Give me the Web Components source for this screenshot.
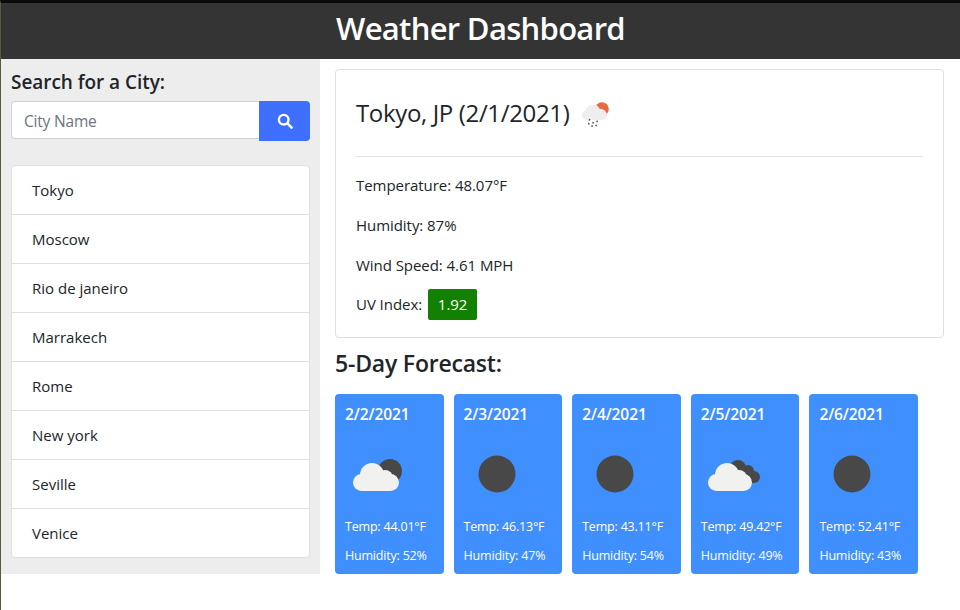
<!DOCTYPE html>
<html>
<head>
<meta charset="utf-8">
<title>Weather Dashboard</title>
<style>
    html, body { margin: 0; height: 100%; background: #fff; }
    body { font-family: "Open Sans", "Noto Sans", sans-serif; color: #212529; }
</style>
</head>
<body>
<weather-app>
    <city-search slot="side"></city-search>
    <city-list slot="side">
        <city-item>Tokyo</city-item>
        <city-item>Moscow</city-item>
        <city-item>Rio de janeiro</city-item>
        <city-item>Marrakech</city-item>
        <city-item>Rome</city-item>
        <city-item>New york</city-item>
        <city-item>Seville</city-item>
        <city-item>Venice</city-item>
    </city-list>
    <current-weather slot="main" title-text="Tokyo, JP (2/1/2021)" temp="48.07" humidity="87" wind="4.61" uv="1.92"></current-weather>
    <forecast-row slot="main">
        <forecast-card date="2/2/2021" icon="few" temp="44.01" humidity="52"></forecast-card>
        <forecast-card date="2/3/2021" icon="clear" temp="46.13" humidity="47"></forecast-card>
        <forecast-card date="2/4/2021" icon="clear" temp="43.11" humidity="54"></forecast-card>
        <forecast-card date="2/5/2021" icon="broken" temp="49.42" humidity="49"></forecast-card>
        <forecast-card date="2/6/2021" icon="clear" temp="52.41" humidity="43"></forecast-card>
    </forecast-row>
</weather-app>

<script>
const appTemplate = document.createElement("template");
appTemplate.innerHTML = `
<style>
    :host {
        display: block;
        width: 960px;
        height: 610px;
        box-sizing: border-box;
        border-top: 3px solid #0b0b0b;
        border-left: 1px solid #5c5a3c;
        overflow: hidden;
    }
    header {
        height: 56px;
        box-sizing: border-box;
        padding-bottom: 6px;
        background: #343434;
        color: #fff;
        font-size: 31px;
        font-weight: 600;
        letter-spacing: -0.7px;
        display: flex;
        justify-content: center;
        align-items: center;
    }
    .body {
        display: flex;
        align-items: flex-start;
    }
    aside {
        width: 319px;
        height: 515px;
        box-sizing: border-box;
        background: #ededed;
        padding: 10px 10px 0;
    }
    main {
        width: 609px;
        margin: 10px 0 0 15px;
    }
</style>
<header>Weather Dashboard</header>
<div class="body">
    <aside><slot name="side"></slot></aside>
    <main><slot name="main"></slot></main>
</div>
`;

class WeatherApp extends HTMLElement {
    constructor() {
        super();
        this.attachShadow({mode: 'open'});
        this.shadowRoot.append(appTemplate.content.cloneNode(true));
    }
}

const searchTemplate = document.createElement("template");
searchTemplate.innerHTML = `
<style>
    :host {
        display: block;
    }
    h4 {
        margin: 0 0 6px;
        height: 26px;
        line-height: 26px;
        font-size: 19px;
        font-weight: 600;
        letter-spacing: -0.05px;
    }
    .group {
        display: flex;
        align-items: flex-start;
    }
    input {
        width: 248px;
        height: 38px;
        box-sizing: border-box;
        padding: 1px 12px 0;
        border: 1px solid #ced4da;
        border-right: 0;
        border-radius: 4px 0 0 4px;
        background: #fff;
        font: 15.5px "Open Sans", sans-serif;
        letter-spacing: -0.2px;
    }
    input::placeholder {
        color: #6c757d;
        opacity: 1;
    }
    button {
        width: 51px;
        height: 40px;
        border: 0;
        padding: 0;
        border-radius: 0 4px 4px 0;
        background: #3f6fff;
        display: flex;
        align-items: center;
        justify-content: center;
    }
</style>
<h4>Search for a City:</h4>
<div class="group">
    <input type="text" placeholder="City Name">
    <button aria-label="Search">
        <svg width="16" height="16" viewBox="0 0 16 16">
            <circle cx="6.7" cy="6.7" r="4.8" fill="none" stroke="#fff" stroke-width="2.4"/>
            <path d="M10.4 10.4 L14.6 14.6" stroke="#fff" stroke-width="2.6" stroke-linecap="round"/>
        </svg>
    </button>
</div>
`;

class CitySearch extends HTMLElement {
    constructor() {
        super();
        this.attachShadow({mode: 'open'});
        this.shadowRoot.append(searchTemplate.content.cloneNode(true));
    }
}

const listTemplate = document.createElement("template");
listTemplate.innerHTML = `
<style>
    :host {
        display: block;
        margin-top: 24px;
        background: #fff;
        border: 1px solid #dfdfdf;
        border-radius: 4px;
    }
</style>
<slot></slot>
`;

class CityList extends HTMLElement {
    constructor() {
        super();
        this.attachShadow({mode: 'open'});
        this.shadowRoot.append(listTemplate.content.cloneNode(true));
    }
}

const itemTemplate = document.createElement("template");
itemTemplate.innerHTML = `
<style>
    :host {
        display: flex;
        align-items: center;
        height: 48px;
        padding: 0 20px;
        font-size: 15px;
        border-bottom: 1px solid #dfdfdf;
    }
    :host(:last-child) {
        border-bottom: 0;
    }
</style>
<slot></slot>
`;

class CityItem extends HTMLElement {
    constructor() {
        super();
        this.attachShadow({mode: 'open'});
        this.shadowRoot.append(itemTemplate.content.cloneNode(true));
    }
}

const icons = {
    rain: `<svg width="40" height="40" viewBox="0 0 40 40">
        <circle cx="27" cy="16" r="6.8" fill="#e8693f"/>
        <g fill="#eeeeee">
            <rect x="7" y="17" width="25" height="10" rx="5"/>
            <circle cx="18" cy="19" r="7.5"/>
            <circle cx="26" cy="20.5" r="4.5"/>
        </g>
        <path d="M14.7 26l-.4 1.6M18.3 29l-.4 1.6M22.3 27.6l-.4 1.6M14 30l-.4 1.6M17.3 32.3l-.4 1.6M21.3 31.6l-.4 1.6" stroke="#555" stroke-width="1.5"/>
    </svg>`,
    few: `<svg width="66" height="66" viewBox="0 0 66 66">
        <circle cx="45" cy="30" r="12" fill="#484848"/>
        <circle cx="40" cy="37" r="9.5" fill="#484848"/>
        <g fill="#f1f1ef">
            <rect x="8" y="33" width="46" height="17" rx="8.5"/>
            <circle cx="27" cy="34" r="12"/>
            <circle cx="40" cy="37" r="8"/>
        </g>
    </svg>`,
    broken: `<svg width="66" height="66" viewBox="0 0 66 66">
        <g fill="#484848">
            <circle cx="37" cy="27" r="8"/>
            <circle cx="47" cy="30" r="6"/>
            <circle cx="53" cy="36" r="6"/>
            <rect x="36" y="28" width="16" height="14"/>
        </g>
        <g fill="#f1f1ef">
            <rect x="7" y="33" width="44" height="17" rx="8.5"/>
            <circle cx="26" cy="34" r="12"/>
            <circle cx="38" cy="37" r="8"/>
        </g>
    </svg>`,
    clear: `<svg width="66" height="66" viewBox="0 0 66 66">
        <circle cx="33" cy="33" r="18.5" fill="#484848"/>
    </svg>`
};

const currentTemplate = document.createElement("template");
currentTemplate.innerHTML = `
<style>
    :host {
        display: block;
        height: 269px;
        box-sizing: border-box;
        padding: 20px;
        border: 1px solid #dfdfdf;
        border-radius: 4px;
        background: #fff;
    }
    h3 {
        margin: 0;
        height: 46px;
        display: flex;
        align-items: center;
        gap: 6px;
        font-size: 24px;
        font-weight: 400;
        letter-spacing: -0.35px;
        white-space: nowrap;
    }
    #title {
        margin-top: -2px;
    }
    #icon svg {
        display: block;
    }
    hr {
        margin: 20px 0 0;
        border: 0;
        border-top: 1px solid #e3e3e3;
    }
    .rows {
        display: grid;
        grid-auto-rows: 40px;
        margin-top: 8px;
        font-size: 15px;
        letter-spacing: -0.05px;
    }
    .rows div {
        display: flex;
        align-items: center;
        gap: 6px;
    }
    .rows .last {
        margin-top: -2px;
    }
    .uv {
        width: 49px;
        height: 31px;
        display: inline-flex;
        align-items: center;
        justify-content: center;
        background: #128000;
        color: #fff;
        border-radius: 2px;
    }
</style>
<h3><span id="title"></span><span id="icon"></span></h3>
<hr>
<div class="rows">
    <div id="temp"></div>
    <div id="humidity"></div>
    <div id="wind"></div>
    <div class="last">UV Index: <span class="uv" id="uv"></span></div>
</div>
`;

class CurrentWeather extends HTMLElement {
    constructor() {
        super();
        this.attachShadow({mode: 'open'});
        this.shadowRoot.append(currentTemplate.content.cloneNode(true));
    }

    connectedCallback() {
        const root = this.shadowRoot;
        root.querySelector("#title").textContent = this.getAttribute("title-text");
        root.querySelector("#icon").innerHTML = icons.rain;
        root.querySelector("#temp").textContent = `Temperature: ${this.getAttribute("temp")}°F`;
        root.querySelector("#humidity").textContent = `Humidity: ${this.getAttribute("humidity")}%`;
        root.querySelector("#wind").textContent = `Wind Speed: ${this.getAttribute("wind")} MPH`;
        root.querySelector("#uv").textContent = this.getAttribute("uv");
    }
}

const rowTemplate = document.createElement("template");
rowTemplate.innerHTML = `
<style>
    :host {
        display: block;
    }
    h4 {
        margin: 12px 0 16px;
        height: 28px;
        line-height: 26px;
        font-size: 23px;
        font-weight: 600;
        letter-spacing: -0.2px;
    }
    .cards {
        display: flex;
        gap: 10px;
    }
</style>
<h4>5-Day Forecast:</h4>
<div class="cards"><slot></slot></div>
`;

class ForecastRow extends HTMLElement {
    constructor() {
        super();
        this.attachShadow({mode: 'open'});
        this.shadowRoot.append(rowTemplate.content.cloneNode(true));
    }
}

const cardTemplate = document.createElement("template");
cardTemplate.innerHTML = `
<style>
    :host {
        display: block;
        width: 108.6px;
        height: 180px;
        box-sizing: border-box;
        padding: 10px;
        background: #408fff;
        color: #fff;
        border-radius: 4px;
    }
    h5 {
        margin: 0;
        height: 20px;
        line-height: 20px;
        font-size: 15.5px;
        font-weight: 600;
        letter-spacing: -0.1px;
        white-space: nowrap;
    }
    #icon {
        display: block;
        height: 66px;
        margin: 17px 0 0;
    }
    svg {
        display: block;
    }
    p {
        margin: 0;
        height: 29px;
        line-height: 29px;
        font-size: 12.5px;
        letter-spacing: -0.2px;
        white-space: nowrap;
    }
    #temp {
        margin-top: 5px;
    }
</style>
<h5 id="date"></h5>
<span id="icon"></span>
<p id="temp"></p>
<p id="humidity"></p>
`;

class ForecastCard extends HTMLElement {
    constructor() {
        super();
        this.attachShadow({mode: 'open'});
        this.shadowRoot.append(cardTemplate.content.cloneNode(true));
    }

    connectedCallback() {
        const root = this.shadowRoot;
        root.querySelector("#date").textContent = this.getAttribute("date");
        root.querySelector("#icon").innerHTML = icons[this.getAttribute("icon")];
        root.querySelector("#temp").textContent = `Temp: ${this.getAttribute("temp")}°F`;
        root.querySelector("#humidity").textContent = `Humidity: ${this.getAttribute("humidity")}%`;
    }
}

customElements.define("weather-app", WeatherApp);
customElements.define("city-search", CitySearch);
customElements.define("city-list", CityList);
customElements.define("city-item", CityItem);
customElements.define("current-weather", CurrentWeather);
customElements.define("forecast-row", ForecastRow);
customElements.define("forecast-card", ForecastCard);
</script>
</body>
</html>
